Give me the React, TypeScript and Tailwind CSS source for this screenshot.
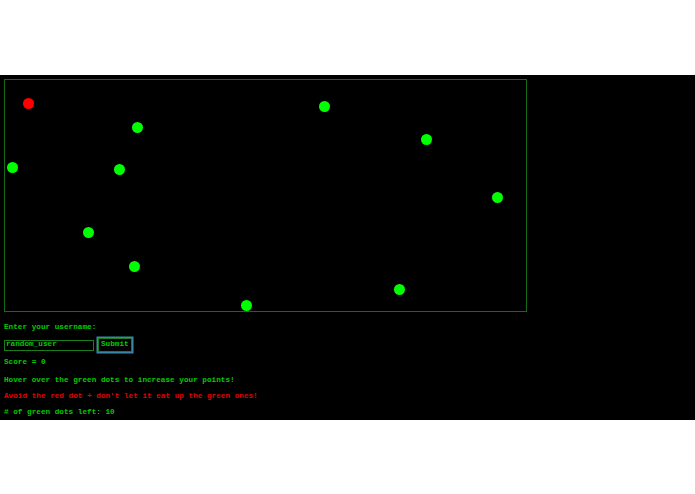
import React from "react";

interface Dot {
  x: number;
  y: number;
  red?: boolean;
}

// centres, relative to the game box
const dots: Dot[] = [
  { x: 24, y: 24, red: true },
  { x: 133, y: 48 },
  { x: 320, y: 27 },
  { x: 422, y: 60 },
  { x: 8, y: 88 },
  { x: 115, y: 90 },
  { x: 493, y: 118 },
  { x: 84, y: 153 },
  { x: 130, y: 187 },
  { x: 395, y: 210 },
  { x: 242, y: 226 },
];

const App: React.FC = () => {
  return (
    <div className="w-[695px] h-[494px] bg-white" style={{ fontFamily: '"Liberation Mono", "DejaVu Sans Mono", monospace' }}>
      <div className="h-[75px]" />
      <div className="bg-black pl-[4px] pt-[4px] text-[7.7px] font-bold text-[#00cc00]">
        {/* game box */}
        <div className="relative w-[523px] h-[233px] border border-[#136b13]">
          {dots.map((d, i) => (
            <span
              key={i}
              className={`absolute w-[11px] h-[11px] rounded-full ${d.red ? "bg-[#ff0000]" : "bg-[#00ff00]"}`}
              style={{ left: d.x - 5.5 - 1, top: d.y - 5.5 - 1 }}
            />
          ))}
        </div>

        <div className="h-[8px]" />
        <div className="h-[16px] flex items-center">Enter your username:</div>
        <div className="h-[18px] flex items-center gap-[4px]">
          <input
            defaultValue="random_user"
            className="w-[90px] h-[11px] bg-black border border-[#1a7f1a] px-[1px] text-[7.7px] font-bold text-[#00cc00] outline-none"
            style={{ fontFamily: "inherit" }}
          />
          <button
            className="h-[14px] px-[2px] bg-black border border-[#1a7f1a] text-[7.7px] font-bold text-[#00cc00] ring-[1.5px] ring-[#3b86a8]"
            style={{ fontFamily: "inherit" }}
          >
            Submit
          </button>
        </div>
        <div className="h-[18px] flex items-center">Score = 0</div>
        <div className="h-[17px] flex items-center">Hover over the green dots to increase your points!</div>
        <div className="h-[16px] flex items-center text-[#e00000]">
          Avoid the red dot + don't let it eat up the green ones!
        </div>
        <div className="h-[15px] flex items-center"># of green dots left: 10</div>
      </div>
    </div>
  );
};

export default App;
